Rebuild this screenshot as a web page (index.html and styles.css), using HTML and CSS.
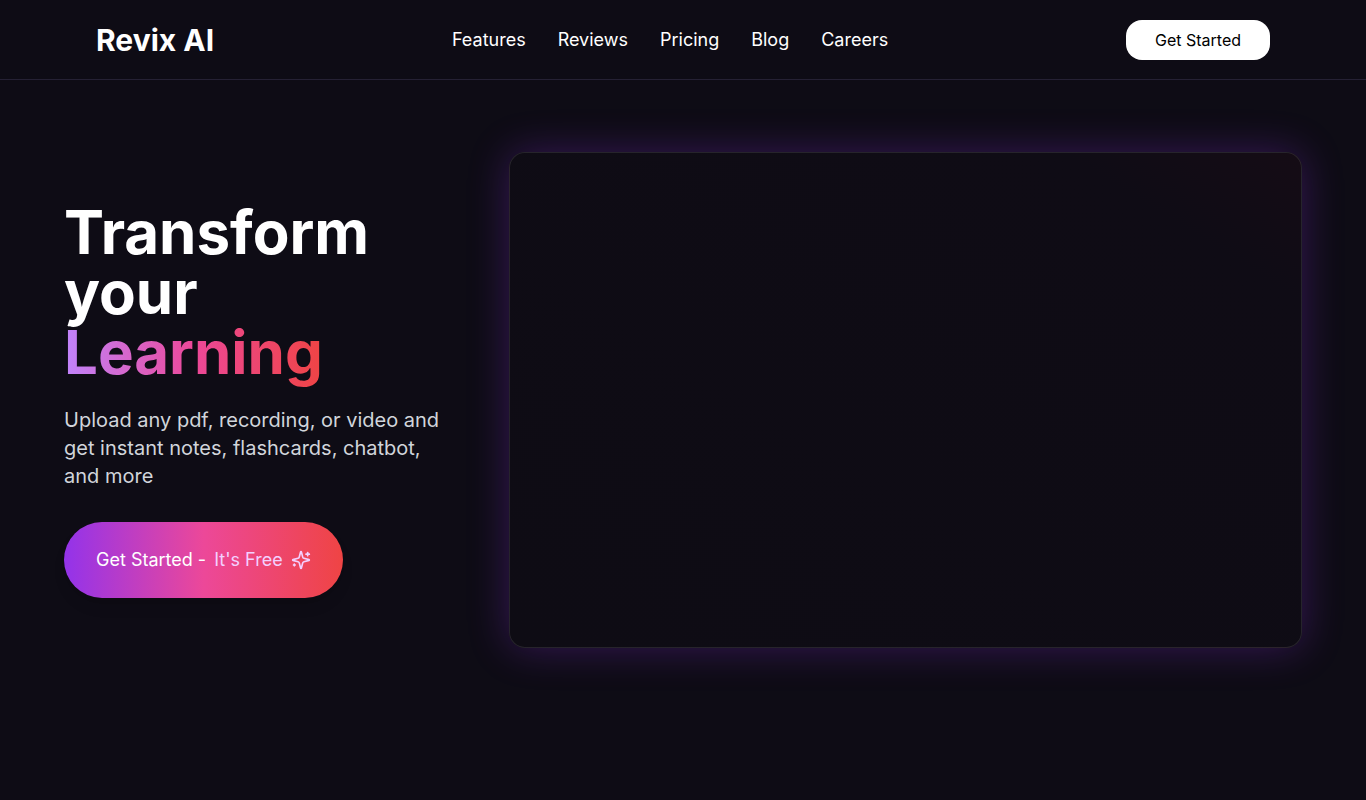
FILE: index.html
```html
<!DOCTYPE html>
<html lang="en">
<head>
    <meta charset="UTF-8">
    <meta name="viewport" content="width=device-width, initial-scale=1.0">
    <title>Revix AI</title>
    <link rel="stylesheet" href="styles.css">
</head>
<body>
    <header class="header">
        <a href="#" class="logo">Revix AI</a>
        <nav class="nav">
            <a href="#features">Features</a>
            <a href="#reviews">Reviews</a>
            <a href="#pricing">Pricing</a>
            <a href="#blog">Blog</a>
            <a href="#careers">Careers</a>
        </nav>
        <button type="button" class="header-btn">Get Started</button>
    </header>

    <main class="hero">
        <div class="hero-text">
            <h1>Transform your <span class="gradient-text">Learning</span></h1>
            <p>Upload any pdf, recording, or video and get instant notes, flashcards, chatbot, and more</p>
            <button type="button" class="cta-btn">
                <span>Get Started -</span>
                <span class="cta-free">It's Free</span>
                <svg class="cta-icon" viewBox="0 0 24 24" fill="none" stroke="currentColor" stroke-width="2" stroke-linecap="round" stroke-linejoin="round" aria-hidden="true">
                    <path d="M9.937 15.5A2 2 0 0 0 8.5 14.063l-6.135-1.582a.5.5 0 0 1 0-.962L8.5 9.936A2 2 0 0 0 9.937 8.5l1.582-6.135a.5.5 0 0 1 .963 0L14.063 8.5A2 2 0 0 0 15.5 9.937l6.135 1.581a.5.5 0 0 1 0 .964L15.5 14.063a2 2 0 0 0-1.437 1.437l-1.582 6.135a.5.5 0 0 1-.963 0z"/>
                    <path d="M20 3v4"/>
                    <path d="M22 5h-4"/>
                    <path d="M4 17v2"/>
                    <path d="M5 18H3"/>
                </svg>
            </button>
        </div>
        <div class="hero-video"></div>
    </main>
</body>
</html>
```

FILE: styles.css
```css
* {
    box-sizing: border-box;
}
body {
    margin: 0;
    min-height: 100vh;
    font-family: Inter, sans-serif;
    background-color: #0e0c15;
    color: white;
}
a {
    color: inherit;
    text-decoration: none;
}
button {
    border: none;
    font-family: inherit;
    cursor: pointer;
}
.header {
    display: flex;
    justify-content: space-between;
    align-items: center;
    height: 80px;
    padding: 0 96px;
    border-bottom: 1px solid #252134;
}
.logo {
    font-size: 30px;
    line-height: 36px;
    font-weight: 700;
}
.nav {
    display: flex;
    gap: 32px;
    font-size: 18px;
    line-height: 28px;
}
.header-btn {
    width: 144px;
    height: 40px;
    border-radius: 16px;
    background-color: white;
    color: black;
    font-size: 16px;
}
.hero {
    display: grid;
    grid-template-columns: 1fr 2fr;
    gap: 48px;
    align-items: center;
    padding: 72px 64px;
}
.hero h1 {
    margin: 0 0 24px;
    font-size: 60px;
    line-height: 60px;
    font-weight: 700;
}
.gradient-text {
    background: linear-gradient(to right, #c084fc, #ec4899, #ef4444);
    -webkit-background-clip: text;
    background-clip: text;
    color: transparent;
}
.hero p {
    margin: 0 0 32px;
    font-size: 20px;
    line-height: 28px;
    color: #d1d5db;
}
.cta-btn {
    display: inline-flex;
    align-items: center;
    gap: 8px;
    padding: 24px 32px;
    border-radius: 40px;
    background: linear-gradient(to right, #9333ea, #ec4899, #ef4444);
    box-shadow: 0 10px 15px -3px rgba(0, 0, 0, 0.1), 0 4px 6px -4px rgba(0, 0, 0, 0.1);
    color: white;
    font-size: 18px;
    line-height: 28px;
}
.cta-free,
.cta-icon {
    color: #f3d0ff;
}
.cta-icon {
    width: 20px;
    height: 20px;
}
.hero-video {
    aspect-ratio: 16 / 10;
    border: 1px solid rgba(255, 255, 255, 0.1);
    border-radius: 16px;
    background: linear-gradient(to top right, #0e0c14, #0f0c15 85%, #150c15);
    box-shadow: 0 0 40px rgba(147, 51, 234, 0.3);
}
```
